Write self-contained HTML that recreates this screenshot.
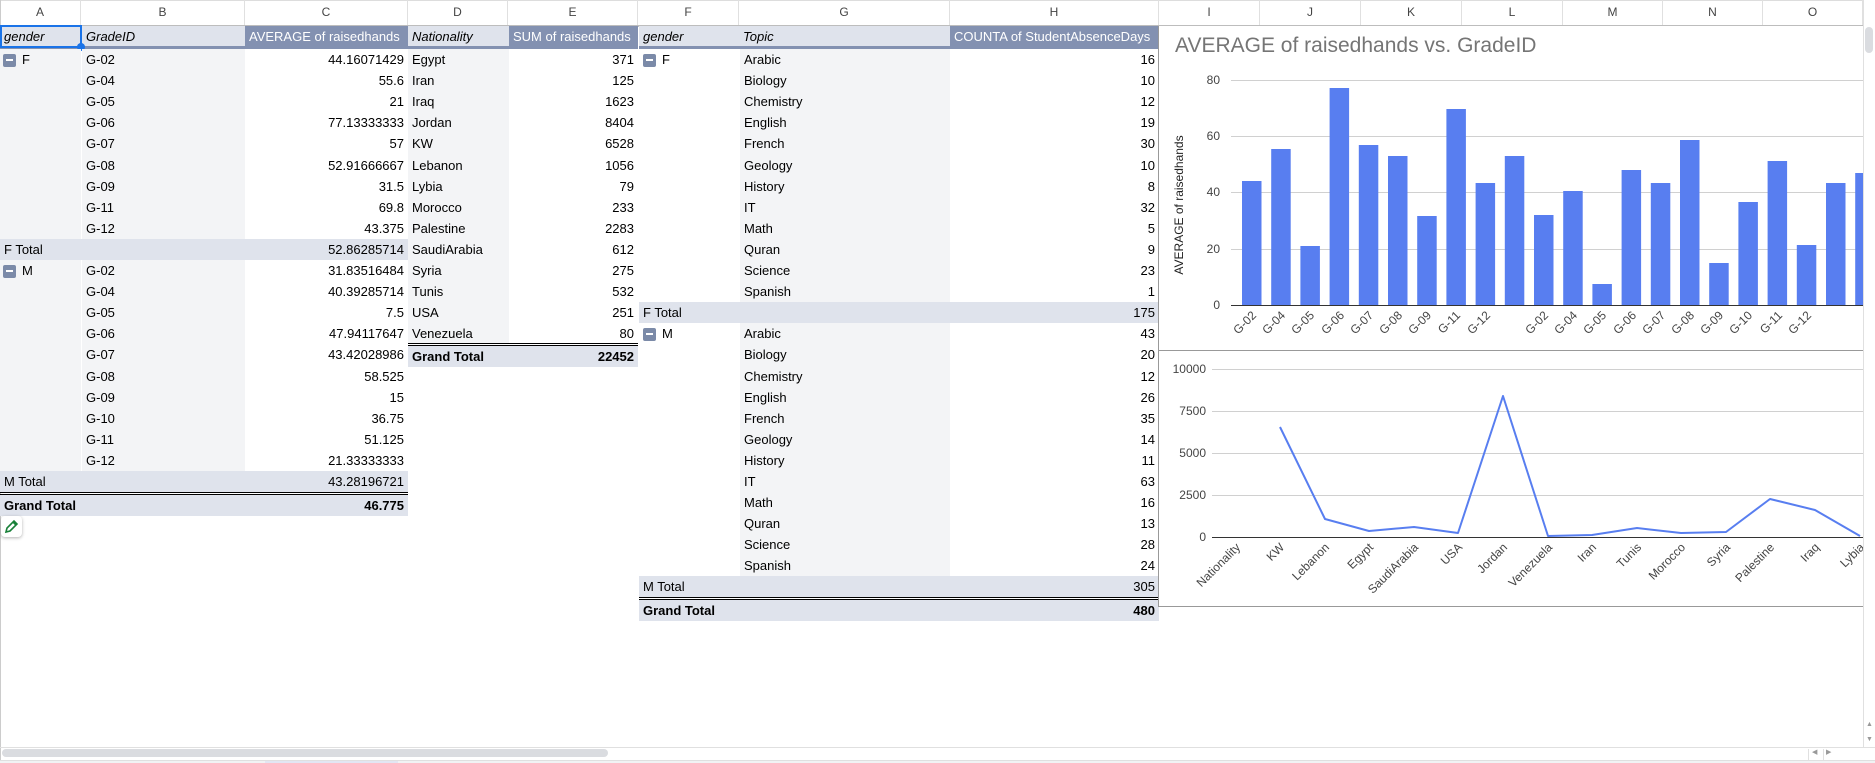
<!DOCTYPE html>
<html><head><meta charset="utf-8">
<style>
*{margin:0;padding:0;box-sizing:border-box}
html,body{width:1875px;height:763px;overflow:hidden;background:#fff;font-family:"Liberation Sans",Arial,sans-serif;font-size:13px;color:#000}
.a{position:absolute}
.c{position:absolute;height:21px;line-height:21px;white-space:nowrap;overflow:hidden;padding:0 4px}
.r{text-align:right}
.i{font-style:italic}
.h{background:#dfe3ec}
.d{background:#8391b1;color:#fff}
.l{background:#f3f4f6}
.b{font-weight:bold}
.m{position:absolute;width:13px;height:13px;background:#7b8aa8;border-radius:2px}
.m:after{content:"";position:absolute;left:3px;top:5px;width:7px;height:2px;background:#fff}
.ch{position:absolute;top:0;height:25px;line-height:25px;text-align:center;color:#444;font-size:12px;border-right:1px solid #e0e0e0}
.dbl{position:absolute;height:3px;border-top:1px solid #000;border-bottom:1px solid #000}
</style></head><body>
<div class="a" style="left:0;top:0;width:1863px;height:27px;border-top:1px solid #ddd;border-bottom:2px solid #bdbdbd"></div>
<div class="ch" style="left:0;width:81px">A</div>
<div class="ch" style="left:81px;width:164px">B</div>
<div class="ch" style="left:245px;width:163px">C</div>
<div class="ch" style="left:408px;width:100px">D</div>
<div class="ch" style="left:508px;width:130px">E</div>
<div class="ch" style="left:638px;width:101px">F</div>
<div class="ch" style="left:739px;width:211px">G</div>
<div class="ch" style="left:950px;width:209px">H</div>
<div class="ch" style="left:1159px;width:101px">I</div>
<div class="ch" style="left:1260px;width:101px">J</div>
<div class="ch" style="left:1361px;width:101px">K</div>
<div class="ch" style="left:1462px;width:101px">L</div>
<div class="ch" style="left:1563px;width:100px">M</div>
<div class="ch" style="left:1663px;width:100px">N</div>
<div class="ch" style="left:1763px;width:100px">O</div>
<div class="a" style="left:0;top:0;width:1px;height:763px;background:#ccc"></div>

<div class="c h i" style="left:0;top:26px;width:81px">gender</div>
<div class="c h i" style="left:82px;top:26px;width:163px">GradeID</div>
<div class="c d" style="left:245px;top:26px;width:163px">AVERAGE of raisedhands</div>
<div class="a" style="left:0;top:46px;width:408px;height:3px;background:#8391b1"></div>
<div class="a" style="left:0;top:25px;width:82px;height:23px;border:2px solid #1a73e8"></div>
<div class="a" style="left:77px;top:43px;width:8px;height:8px;border-radius:50%;background:#1a73e8"></div>
<div class="a l" style="left:0;top:49px;width:81px;height:190px"></div>
<div class="a l" style="left:82px;top:49px;width:163px;height:190px"></div>
<div class="a l" style="left:0;top:260px;width:81px;height:211px"></div>
<div class="a l" style="left:82px;top:260px;width:163px;height:211px"></div>
<div class="a h" style="left:0;top:239px;width:408px;height:21px"></div>
<div class="a h" style="left:0;top:471px;width:408px;height:21px"></div>
<div class="dbl" style="left:0;top:492px;width:408px"></div>
<div class="a h" style="left:0;top:495px;width:408px;height:21px"></div>
<div class="m" style="left:3px;top:54px"></div><div class="c" style="left:18px;top:49px">F</div>
<div class="m" style="left:3px;top:265px"></div><div class="c" style="left:18px;top:260px">M</div>
<div class="c" style="left:82px;top:49px">G-02</div><div class="c r" style="left:245px;top:49px;width:163px">44.16071429</div>
<div class="c" style="left:82px;top:70px">G-04</div><div class="c r" style="left:245px;top:70px;width:163px">55.6</div>
<div class="c" style="left:82px;top:91px">G-05</div><div class="c r" style="left:245px;top:91px;width:163px">21</div>
<div class="c" style="left:82px;top:112px">G-06</div><div class="c r" style="left:245px;top:112px;width:163px">77.13333333</div>
<div class="c" style="left:82px;top:133px">G-07</div><div class="c r" style="left:245px;top:133px;width:163px">57</div>
<div class="c" style="left:82px;top:155px">G-08</div><div class="c r" style="left:245px;top:155px;width:163px">52.91666667</div>
<div class="c" style="left:82px;top:176px">G-09</div><div class="c r" style="left:245px;top:176px;width:163px">31.5</div>
<div class="c" style="left:82px;top:197px">G-11</div><div class="c r" style="left:245px;top:197px;width:163px">69.8</div>
<div class="c" style="left:82px;top:218px">G-12</div><div class="c r" style="left:245px;top:218px;width:163px">43.375</div>
<div class="c" style="left:0;top:239px">F Total</div><div class="c r" style="left:245px;top:239px;width:163px">52.86285714</div>
<div class="c" style="left:82px;top:260px">G-02</div><div class="c r" style="left:245px;top:260px;width:163px">31.83516484</div>
<div class="c" style="left:82px;top:281px">G-04</div><div class="c r" style="left:245px;top:281px;width:163px">40.39285714</div>
<div class="c" style="left:82px;top:302px">G-05</div><div class="c r" style="left:245px;top:302px;width:163px">7.5</div>
<div class="c" style="left:82px;top:323px">G-06</div><div class="c r" style="left:245px;top:323px;width:163px">47.94117647</div>
<div class="c" style="left:82px;top:344px">G-07</div><div class="c r" style="left:245px;top:344px;width:163px">43.42028986</div>
<div class="c" style="left:82px;top:366px">G-08</div><div class="c r" style="left:245px;top:366px;width:163px">58.525</div>
<div class="c" style="left:82px;top:387px">G-09</div><div class="c r" style="left:245px;top:387px;width:163px">15</div>
<div class="c" style="left:82px;top:408px">G-10</div><div class="c r" style="left:245px;top:408px;width:163px">36.75</div>
<div class="c" style="left:82px;top:429px">G-11</div><div class="c r" style="left:245px;top:429px;width:163px">51.125</div>
<div class="c" style="left:82px;top:450px">G-12</div><div class="c r" style="left:245px;top:450px;width:163px">21.33333333</div>
<div class="c" style="left:0;top:471px">M Total</div><div class="c r" style="left:245px;top:471px;width:163px">43.28196721</div>
<div class="c b" style="left:0;top:495px">Grand Total</div><div class="c r b" style="left:245px;top:495px;width:163px">46.775</div>
<div class="a" style="left:1px;top:516px;width:21px;height:21px;background:#fff;border-radius:4px;box-shadow:0 1px 3px rgba(0,0,0,.3)">
<svg width="21" height="21" viewBox="0 0 21 21"><path d="M5 16 L6 12 L13 5 L16 8 L9 15 Z M12 6 L15 9" fill="none" stroke="#188038" stroke-width="1.6"/></svg></div>

<div class="c h i" style="left:408px;top:26px;width:101px">Nationality</div>
<div class="c d" style="left:509px;top:26px;width:129px">SUM of raisedhands</div>
<div class="a" style="left:408px;top:46px;width:230px;height:3px;background:#8391b1"></div>
<div class="a l" style="left:408px;top:49px;width:101px;height:294px"></div>
<div class="dbl" style="left:408px;top:343px;width:230px"></div>
<div class="a h" style="left:408px;top:346px;width:230px;height:21px"></div>
<div class="c" style="left:408px;top:49px">Egypt</div><div class="c r" style="left:509px;top:49px;width:129px">371</div>
<div class="c" style="left:408px;top:70px">Iran</div><div class="c r" style="left:509px;top:70px;width:129px">125</div>
<div class="c" style="left:408px;top:91px">Iraq</div><div class="c r" style="left:509px;top:91px;width:129px">1623</div>
<div class="c" style="left:408px;top:112px">Jordan</div><div class="c r" style="left:509px;top:112px;width:129px">8404</div>
<div class="c" style="left:408px;top:133px">KW</div><div class="c r" style="left:509px;top:133px;width:129px">6528</div>
<div class="c" style="left:408px;top:155px">Lebanon</div><div class="c r" style="left:509px;top:155px;width:129px">1056</div>
<div class="c" style="left:408px;top:176px">Lybia</div><div class="c r" style="left:509px;top:176px;width:129px">79</div>
<div class="c" style="left:408px;top:197px">Morocco</div><div class="c r" style="left:509px;top:197px;width:129px">233</div>
<div class="c" style="left:408px;top:218px">Palestine</div><div class="c r" style="left:509px;top:218px;width:129px">2283</div>
<div class="c" style="left:408px;top:239px">SaudiArabia</div><div class="c r" style="left:509px;top:239px;width:129px">612</div>
<div class="c" style="left:408px;top:260px">Syria</div><div class="c r" style="left:509px;top:260px;width:129px">275</div>
<div class="c" style="left:408px;top:281px">Tunis</div><div class="c r" style="left:509px;top:281px;width:129px">532</div>
<div class="c" style="left:408px;top:302px">USA</div><div class="c r" style="left:509px;top:302px;width:129px">251</div>
<div class="c" style="left:408px;top:323px">Venezuela</div><div class="c r" style="left:509px;top:323px;width:129px">80</div>
<div class="c b" style="left:408px;top:346px">Grand Total</div><div class="c r b" style="left:509px;top:346px;width:129px">22452</div>

<div class="c h i" style="left:639px;top:26px;width:100px">gender</div>
<div class="c h i" style="left:739px;top:26px;width:211px">Topic</div>
<div class="c d" style="left:950px;top:26px;width:209px">COUNTA of StudentAbsenceDays</div>
<div class="a" style="left:639px;top:46px;width:520px;height:3px;background:#8391b1"></div>
<div class="a l" style="left:740px;top:49px;width:210px;height:253px"></div>
<div class="a l" style="left:740px;top:323px;width:210px;height:253px"></div>
<div class="a h" style="left:639px;top:302px;width:520px;height:21px"></div>
<div class="a h" style="left:639px;top:576px;width:520px;height:21px"></div>
<div class="dbl" style="left:639px;top:597px;width:520px"></div>
<div class="a h" style="left:639px;top:600px;width:520px;height:21px"></div>
<div class="m" style="left:643px;top:54px"></div><div class="c" style="left:658px;top:49px">F</div>
<div class="m" style="left:643px;top:328px"></div><div class="c" style="left:658px;top:323px">M</div>
<div class="c" style="left:740px;top:49px">Arabic</div><div class="c r" style="left:950px;top:49px;width:209px">16</div>
<div class="c" style="left:740px;top:70px">Biology</div><div class="c r" style="left:950px;top:70px;width:209px">10</div>
<div class="c" style="left:740px;top:91px">Chemistry</div><div class="c r" style="left:950px;top:91px;width:209px">12</div>
<div class="c" style="left:740px;top:112px">English</div><div class="c r" style="left:950px;top:112px;width:209px">19</div>
<div class="c" style="left:740px;top:133px">French</div><div class="c r" style="left:950px;top:133px;width:209px">30</div>
<div class="c" style="left:740px;top:155px">Geology</div><div class="c r" style="left:950px;top:155px;width:209px">10</div>
<div class="c" style="left:740px;top:176px">History</div><div class="c r" style="left:950px;top:176px;width:209px">8</div>
<div class="c" style="left:740px;top:197px">IT</div><div class="c r" style="left:950px;top:197px;width:209px">32</div>
<div class="c" style="left:740px;top:218px">Math</div><div class="c r" style="left:950px;top:218px;width:209px">5</div>
<div class="c" style="left:740px;top:239px">Quran</div><div class="c r" style="left:950px;top:239px;width:209px">9</div>
<div class="c" style="left:740px;top:260px">Science</div><div class="c r" style="left:950px;top:260px;width:209px">23</div>
<div class="c" style="left:740px;top:281px">Spanish</div><div class="c r" style="left:950px;top:281px;width:209px">1</div>
<div class="c" style="left:639px;top:302px">F Total</div><div class="c r" style="left:950px;top:302px;width:209px">175</div>
<div class="c" style="left:740px;top:323px">Arabic</div><div class="c r" style="left:950px;top:323px;width:209px">43</div>
<div class="c" style="left:740px;top:344px">Biology</div><div class="c r" style="left:950px;top:344px;width:209px">20</div>
<div class="c" style="left:740px;top:366px">Chemistry</div><div class="c r" style="left:950px;top:366px;width:209px">12</div>
<div class="c" style="left:740px;top:387px">English</div><div class="c r" style="left:950px;top:387px;width:209px">26</div>
<div class="c" style="left:740px;top:408px">French</div><div class="c r" style="left:950px;top:408px;width:209px">35</div>
<div class="c" style="left:740px;top:429px">Geology</div><div class="c r" style="left:950px;top:429px;width:209px">14</div>
<div class="c" style="left:740px;top:450px">History</div><div class="c r" style="left:950px;top:450px;width:209px">11</div>
<div class="c" style="left:740px;top:471px">IT</div><div class="c r" style="left:950px;top:471px;width:209px">63</div>
<div class="c" style="left:740px;top:492px">Math</div><div class="c r" style="left:950px;top:492px;width:209px">16</div>
<div class="c" style="left:740px;top:513px">Quran</div><div class="c r" style="left:950px;top:513px;width:209px">13</div>
<div class="c" style="left:740px;top:534px">Science</div><div class="c r" style="left:950px;top:534px;width:209px">28</div>
<div class="c" style="left:740px;top:555px">Spanish</div><div class="c r" style="left:950px;top:555px;width:209px">24</div>
<div class="c" style="left:639px;top:576px">M Total</div><div class="c r" style="left:950px;top:576px;width:209px">305</div>
<div class="c b" style="left:639px;top:600px">Grand Total</div><div class="c r b" style="left:950px;top:600px;width:209px">480</div>

<svg class="a" style="left:1158px;top:26px" width="705" height="581" viewBox="0 0 705 581" font-family="Liberation Sans, Arial, sans-serif">
<rect x="0" y="0" width="705" height="581" fill="#fff"/>
<line x1="0.5" y1="0" x2="0.5" y2="581" stroke="#999"/>
<line x1="0" y1="580.5" x2="705" y2="580.5" stroke="#999"/>
<line x1="0" y1="324.5" x2="705" y2="324.5" stroke="#999"/>
<text x="17" y="26" font-size="21" fill="#757575">AVERAGE of raisedhands vs. GradeID</text>
<g stroke="#d0d0d0"><line x1="73" y1="54.5" x2="705" y2="54.5"/><line x1="73" y1="110.5" x2="705" y2="110.5"/><line x1="73" y1="166.5" x2="705" y2="166.5"/><line x1="73" y1="223.5" x2="705" y2="223.5"/></g>
<g font-size="12" fill="#444" text-anchor="end"><text x="62" y="58">80</text><text x="62" y="114">60</text><text x="62" y="170">40</text><text x="62" y="227">20</text><text x="62" y="283">0</text></g>
<text transform="translate(25,179) rotate(-90)" font-size="12" fill="#222" text-anchor="middle">AVERAGE of raisedhands</text>
<g fill="#587ef0">
<rect x="84" y="155" width="19.5" height="124"/>
<rect x="113.2" y="123" width="19.5" height="156"/>
<rect x="142.4" y="220" width="19.5" height="59"/>
<rect x="171.6" y="62" width="19.5" height="217"/>
<rect x="200.8" y="119" width="19.5" height="160"/>
<rect x="230" y="130" width="19.5" height="149"/>
<rect x="259.2" y="190" width="19.5" height="89"/>
<rect x="288.4" y="83" width="19.5" height="196"/>
<rect x="317.6" y="157" width="19.5" height="122"/>
<rect x="346.8" y="130" width="19.5" height="149"/>
<rect x="376" y="189" width="19.5" height="90"/>
<rect x="405.2" y="165" width="19.5" height="114"/>
<rect x="434.4" y="258" width="19.5" height="21"/>
<rect x="463.6" y="144" width="19.5" height="135"/>
<rect x="492.8" y="157" width="19.5" height="122"/>
<rect x="522" y="114" width="19.5" height="165"/>
<rect x="551.2" y="237" width="19.5" height="42"/>
<rect x="580.4" y="176" width="19.5" height="103"/>
<rect x="609.6" y="135" width="19.5" height="144"/>
<rect x="638.8" y="219" width="19.5" height="60"/>
<rect x="668" y="157" width="19.5" height="122"/>
<rect x="697.2" y="147" width="19.5" height="132"/>
</g>
<line x1="73" y1="279.5" x2="705" y2="279.5" stroke="#333"/>
<g font-size="12" fill="#444" text-anchor="end">
<text transform="translate(99,290) rotate(-45)">G-02</text>
<text transform="translate(128,290) rotate(-45)">G-04</text>
<text transform="translate(157,290) rotate(-45)">G-05</text>
<text transform="translate(187,290) rotate(-45)">G-06</text>
<text transform="translate(216,290) rotate(-45)">G-07</text>
<text transform="translate(245,290) rotate(-45)">G-08</text>
<text transform="translate(274,290) rotate(-45)">G-09</text>
<text transform="translate(303,290) rotate(-45)">G-11</text>
<text transform="translate(333,290) rotate(-45)">G-12</text>
<text transform="translate(391,290) rotate(-45)">G-02</text>
<text transform="translate(420,290) rotate(-45)">G-04</text>
<text transform="translate(449,290) rotate(-45)">G-05</text>
<text transform="translate(479,290) rotate(-45)">G-06</text>
<text transform="translate(508,290) rotate(-45)">G-07</text>
<text transform="translate(537,290) rotate(-45)">G-08</text>
<text transform="translate(566,290) rotate(-45)">G-09</text>
<text transform="translate(595,290) rotate(-45)">G-10</text>
<text transform="translate(625,290) rotate(-45)">G-11</text>
<text transform="translate(654,290) rotate(-45)">G-12</text>
</g>
<g stroke="#d0d0d0"><line x1="54" y1="343.5" x2="705" y2="343.5"/><line x1="54" y1="385.5" x2="705" y2="385.5"/><line x1="54" y1="427.5" x2="705" y2="427.5"/><line x1="54" y1="469.5" x2="705" y2="469.5"/></g>
<line x1="54" y1="511.5" x2="705" y2="511.5" stroke="#333"/>
<g font-size="12" fill="#444" text-anchor="end"><text x="48" y="347">10000</text><text x="48" y="389">7500</text><text x="48" y="431">5000</text><text x="48" y="473">2500</text><text x="48" y="515">0</text></g>
<polyline fill="none" stroke="#587ef0" stroke-width="2" stroke-linejoin="round" points="122,401 167,493 211,505 256,501 300,507 345,370 390,510 434,509 479,502 523,507 568,506 612,473 657,484 702,510"/>
<g font-size="12" fill="#444" text-anchor="end">
<text transform="translate(83,522) rotate(-45)">Nationality</text>
<text transform="translate(127,522) rotate(-45)">KW</text>
<text transform="translate(172,522) rotate(-45)">Lebanon</text>
<text transform="translate(216,522) rotate(-45)">Egypt</text>
<text transform="translate(261,522) rotate(-45)">SaudiArabia</text>
<text transform="translate(305,522) rotate(-45)">USA</text>
<text transform="translate(350,522) rotate(-45)">Jordan</text>
<text transform="translate(395,522) rotate(-45)">Venezuela</text>
<text transform="translate(439,522) rotate(-45)">Iran</text>
<text transform="translate(484,522) rotate(-45)">Tunis</text>
<text transform="translate(528,522) rotate(-45)">Morocco</text>
<text transform="translate(573,522) rotate(-45)">Syria</text>
<text transform="translate(617,522) rotate(-45)">Palestine</text>
<text transform="translate(662,522) rotate(-45)">Iraq</text>
<text transform="translate(707,522) rotate(-45)">Lybia</text>
</g>
</svg>

<div class="a" style="left:1863px;top:0;width:12px;height:747px;background:#fff;border-left:1px solid #e0e0e0"></div>
<div class="a" style="left:1865px;top:27px;width:8px;height:26px;background:#dadce0;border-radius:4px"></div>
<div class="a" style="left:1866px;top:721px;font-size:7px;color:#999">▲</div>
<div class="a" style="left:1866px;top:736px;font-size:7px;color:#999">▼</div>
<div class="a" style="left:0;top:747px;width:1875px;height:1px;background:#e0e0e0"></div>
<div class="a" style="left:2px;top:749px;width:606px;height:8px;background:#dadce0;border-radius:4px"></div>
<div class="a" style="left:0;top:760px;width:1875px;height:3px;background:#f1f3f4;border-top:1px solid #e0e0e0"></div>
<div class="a" style="left:265px;top:761px;width:133px;height:2px;background:#e2e6f3"></div>
<div class="a" style="left:1808px;top:749px;width:1px;height:11px;background:#e0e0e0"></div>
<div class="a" style="left:1823px;top:749px;width:1px;height:11px;background:#e0e0e0"></div>
<div class="a" style="left:1812px;top:748px;font-size:7px;color:#999">◀</div>
<div class="a" style="left:1826px;top:748px;font-size:7px;color:#999">▶</div>
</body></html>
